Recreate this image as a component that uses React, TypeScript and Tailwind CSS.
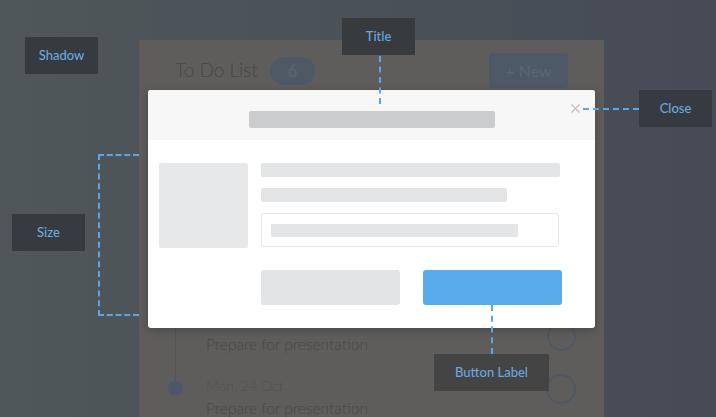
import { X } from "lucide-react";

function Callout({ label, className }: { label: string; className: string }) {
  return (
    <div
      className={`absolute flex h-[37px] items-center justify-center bg-[#353b41] text-[13px] font-medium text-[#6aa8dc] ${className}`}
    >
      {label}
    </div>
  );
}

function Dashed({ className }: { className: string }) {
  return <div className={`absolute border-[#5aa6e6] border-dashed ${className}`} />;
}

export default function App() {
  return (
    <div className="relative h-[417px] w-[716px] overflow-hidden bg-gradient-to-r from-[#4f575a] via-[#4a5158] to-[#464b55] font-['Lato',sans-serif]">
      {/* card behind the modal */}
      <div className="ml-[139px] mt-[40px] flex h-[377px] w-[465px] flex-col bg-[#5e5d5c] px-[36px]">
        <div className="mt-[13px] flex h-[35px] items-center justify-between">
          <div className="flex items-center gap-[12px]">
            <span className="text-[19px] font-light text-[#474747]">To Do List</span>
            <span className="flex h-[28px] w-[45px] items-center justify-center rounded-full bg-[#4f5966] text-[17px] text-[#5a646e]">
              6
            </span>
          </div>
          <div className="flex h-[35px] w-[79px] items-center justify-center rounded-[4px] bg-[#4d5966] text-[16px] text-[#5a6670]">
            + New
          </div>
        </div>

        <div className="relative mt-[240px] flex flex-col">
          <div className="absolute left-[-0.5px] top-0 h-[56px] w-px bg-[#545454]" />
          <div className="flex h-[31px] items-start justify-between">
            <span className="ml-[31px] pt-[5px] text-[15.5px] font-light text-[#474747]">Prepare for presentation</span>
            <span className="mr-[-8px] -mt-[6px] h-[29px] w-[29px] rounded-full border-2 border-[#4f5864]" />
          </div>
          <div className="mt-[18px] flex items-start justify-between">
            <div className="relative flex flex-col">
              <span className="absolute left-[-7.5px] top-[4px] h-[15px] w-[15px] rounded-full bg-[#4d5968]" />
              <span className="ml-[31px] text-[14px] font-light leading-[18px] text-[#525252]">Mon, 24 Oct</span>
              <span className="ml-[31px] mt-[3px] text-[15.5px] font-light leading-[20px] text-[#474747]">Prepare for presentation</span>
            </div>
            <span className="mr-[-8px] mt-[-3px] h-[30px] w-[30px] rounded-full border-2 border-[#4f5864]" />
          </div>
        </div>
      </div>

      {/* modal */}
      <div className="absolute left-[148px] top-[90px] flex h-[238px] w-[447px] flex-col overflow-hidden rounded-[3px] bg-white shadow-[0_2px_8px_rgba(0,0,0,0.25)]">
        <div className="relative flex h-[50px] items-start justify-center bg-[#f7f7f7] pt-[21px]">
          <div className="ml-[1px] h-[17px] w-[246px] rounded-[2px] bg-[#cbcccd]" />
          <X className="absolute right-[12px] top-[11px] h-[15px] w-[15px] text-[#bdbdbd]" strokeWidth={1.8} />
        </div>
        <div className="flex gap-[13px] px-[11px] pt-[23px]">
          <div className="h-[85px] w-[89px] rounded-[2px] bg-[#e6e8ea]" />
          <div className="flex w-[299px] flex-col">
            <div className="h-[14px] w-[299px] rounded-[2px] bg-[#e4e5e7]" />
            <div className="mt-[11px] h-[14px] w-[246px] rounded-[2px] bg-[#e4e5e7]" />
            <div className="mt-[11px] flex h-[34px] w-[298px] items-center rounded-[3px] border border-[#e6e7e9] px-[9px]">
              <div className="h-[13px] w-[247px] rounded-[1px] bg-[#e4e5e7]" />
            </div>
          </div>
        </div>
        <div className="ml-[113px] mt-[22px] flex gap-[23px]">
          <div className="h-[35px] w-[139px] rounded-[3px] bg-[#e2e4e6]" />
          <div className="h-[35px] w-[139px] rounded-[3px] bg-[#5aabec]" />
        </div>
      </div>

      {/* annotations */}
      <Callout label="Shadow" className="left-[25px] top-[37px] w-[73px]" />
      <Callout label="Title" className="left-[342px] top-[18px] w-[73px] bg-[#383b3e]" />
      <Callout label="Close" className="left-[639px] top-[90px] w-[73px]" />
      <Callout label="Size" className="left-[12px] top-[214px] w-[73px]" />
      <Callout label="Button Label" className="left-[434px] top-[354px] w-[115px] bg-[#444444]" />

      <Dashed className="left-[379px] top-[56px] h-[48px] border-l-2" />
      <Dashed className="left-[583px] top-[108px] w-[56px] border-t-2" />
      <Dashed className="left-[491px] top-[305px] h-[49px] border-l-2" />
      <Dashed className="left-[98px] top-[154px] h-[162px] w-[41px] border-y-2 border-l-2" />
    </div>
  );
}
